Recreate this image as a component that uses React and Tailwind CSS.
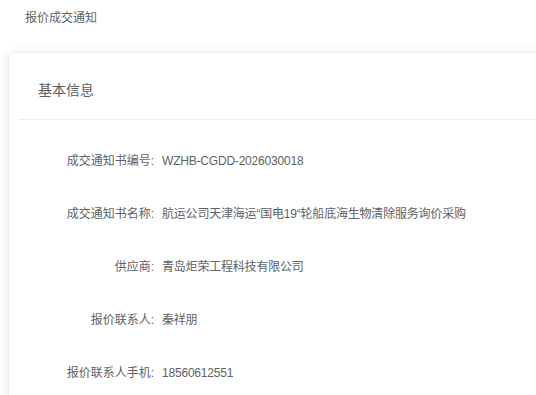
const rows = [
  { label: "成交通知书编号:", value: "WZHB-CGDD-2026030018" },
  { label: "成交通知书名称:", value: "航运公司天津海运“国电19“轮船底海生物清除服务询价采购" },
  { label: "供应商:", value: "青岛炬荣工程科技有限公司" },
  { label: "报价联系人:", value: "秦祥朋" },
  { label: "报价联系人手机:", value: "18560612551" },
];

const App = () => {
  return (
    <div
      className="w-full h-[395px] overflow-hidden bg-white text-[#606266]"
      style={{ fontFamily: '"Liberation Sans", "Noto Sans CJK SC", sans-serif' }}
    >
      <div className="pl-[25px] pt-[10px] text-[12px] leading-[16px]">报价成交通知</div>
      <div className="mt-[26px] ml-[8px] mr-[-20px] bg-white rounded-[4px] border border-[#f0f0f0] shadow-[0_2px_12px_0_rgba(0,0,0,0.1)] px-[10px]">
        <div className="pl-[19px] pt-[27px] pb-[19px] border-b border-[#ebeef5] text-[14px] leading-[20px] text-[#5a5c62]">
          基本信息
        </div>
        <div className="pt-[14px] pb-[20px]">
          {rows.map((row) => (
            <div key={row.label} className="h-[53px] flex items-center text-[12px] leading-[16px]">
              <div className="w-[135px] text-right">{row.label}</div>
              <div className="pl-[8px] tracking-[-0.2px]">{row.value}</div>
            </div>
          ))}
        </div>
      </div>
    </div>
  );
};

export default App;
